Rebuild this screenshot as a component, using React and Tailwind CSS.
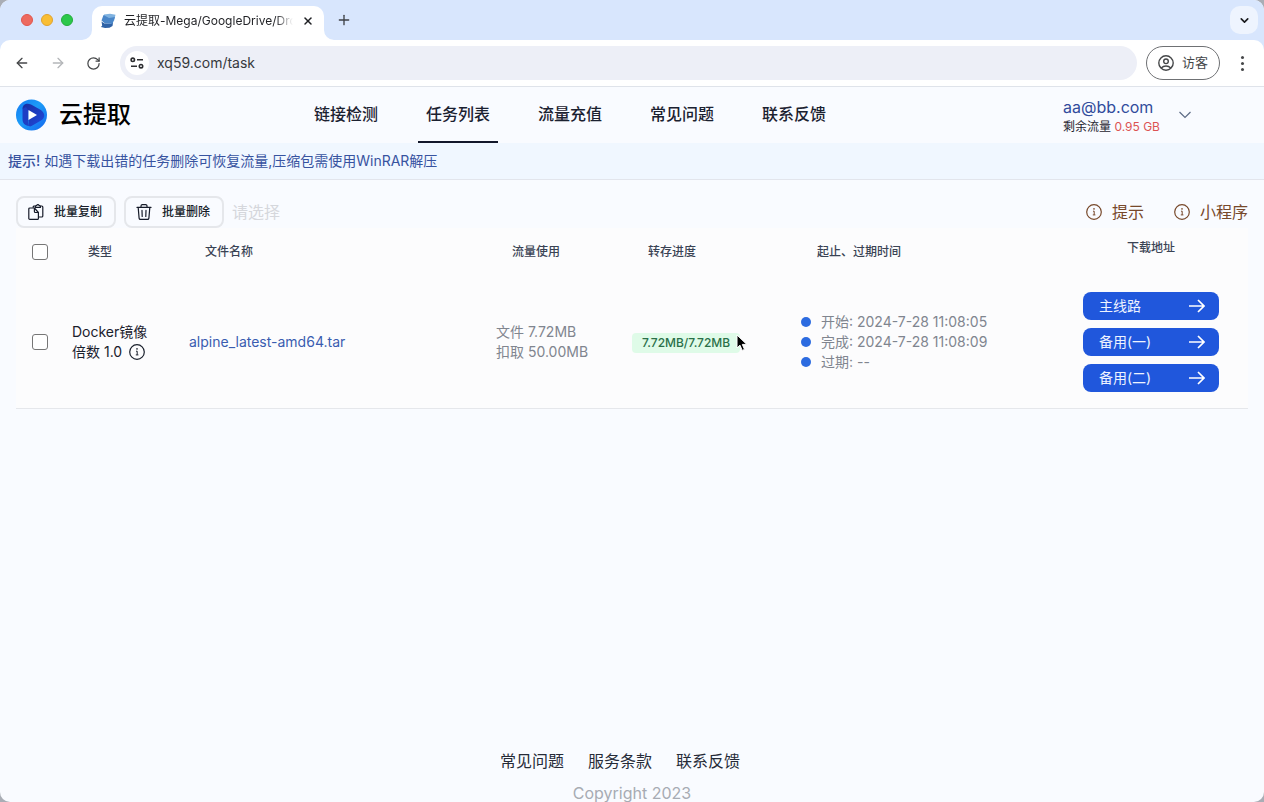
import React, { useState } from "react";
import { ArrowLeft, ArrowRight, ChevronDown, Plus, RotateCw, X } from "lucide-react";

const NAV_ITEMS = ["链接检测", "任务列表", "流量充值", "常见问题", "联系反馈"];
const FOOTER_LINKS = ["常见问题", "服务条款", "联系反馈"];

const TASKS = [
  {
    id: 1,
    type: "Docker镜像",
    ratio: "1.0",
    name: "alpine_latest-amd64.tar",
    size: "7.72MB",
    cost: "50.00MB",
    progress: "7.72MB/7.72MB",
    times: ["开始: 2024-7-28 11:08:05", "完成: 2024-7-28 11:08:09", "过期: --"],
    lines: ["主线路", "备用(一)", "备用(二)"],
  },
];

function InfoIcon() {
  return (
    <svg className="size-4 shrink-0" viewBox="0 0 16 16" fill="none" stroke="currentColor">
      <circle cx="8" cy="8" r="7.3" strokeWidth="1.2" />
      <path d="M7 7.2h1.2v3.6M6.8 10.9h2.6" strokeWidth="1" />
      <circle cx="8" cy="4.9" r="0.8" fill="currentColor" stroke="none" />
    </svg>
  );
}

function CopyIcon() {
  return (
    <svg className="size-4" viewBox="0 0 16 16" fill="none" stroke="currentColor" strokeWidth="1.2" strokeLinejoin="round">
      <path d="M1.800 4h4.600l4 4.500v5.900a1 1 0 0 1-1 1H1.800a1 1 0 0 1-1-1V5a1 1 0 0 1 1-1z" />
      <path d="M6.400 4v3.500a1 1 0 0 0 1 1h3" />
      <path d="M5.200 3.800V3a1 1 0 0 1 1-1h1.200M12.400 2h1.400a1 1 0 0 1 1 1v9a1 1 0 0 1-1 1h-3.200" />
      <path d="M7.400 3.400V2l1.400-.6c.3-1 1.900-1 2.200 0l1.400.6v1.400z" />
    </svg>
  );
}

function TrashIcon() {
  return (
    <svg className="size-4" viewBox="0 0 16 16" fill="none" stroke="currentColor" strokeWidth="1.2" strokeLinejoin="round" strokeLinecap="round">
      <path d="M1 3.400h14M5 3.200V2a1.400 1.400 0 0 1 1.400-1.400h3.200A1.400 1.400 0 0 1 11 2v1.200" />
      <path d="M2.200 3.600l.9 10.500a1.400 1.400 0 0 0 1.400 1.300h7a1.400 1.400 0 0 0 1.400-1.300l.9-10.500" />
      <path d="M6 6.400l.2 6M10 6.400l-.2 6" />
    </svg>
  );
}

function TabFlare({ className }) {
  return (
    <svg className={`absolute bottom-0 size-2.5 fill-white ${className}`} viewBox="0 0 10 10">
      <path d="M10 0v10H0A10 10 0 0 0 10 0z" />
    </svg>
  );
}

function TabStrip() {
  return (
    <div className="flex h-10 items-center bg-[#d8e6fd]">
      <div className="flex w-[92px] gap-2 pl-[21px]">
        <span className="size-3 rounded-full border border-[#e2554d] bg-[#ed6a5f]" />
        <span className="size-3 rounded-full border border-[#e0a32e] bg-[#f9be34]" />
        <span className="size-3 rounded-full border border-[#24ac3b] bg-[#2bc84b]" />
      </div>
      <div className="relative flex h-[34px] w-[232px] items-center self-end rounded-t-[10px] bg-white px-2">
        <TabFlare className="-left-2.5" />
        <TabFlare className="-right-2.5 -scale-x-100" />
        <svg className="mb-1 size-4 shrink-0" viewBox="0 0 16 16">
          <path d="M4 1.500L10 .8 15.500 1.800 14 8 11 9 3.500 7.500z" fill="#7fb2e0" />
          <path d="M3.500 2L1.500 7.500l3.500 3 7.500.5 2.500-7L9 5z" fill="#4a86c8" />
          <path d="M1.500 8.500l3 2 6.500.5 2-1-.5 3-3 1.700-4.500.300L1 14l1.200-1.500z" fill="#2f62a6" />
        </svg>
        <span className="mb-1 ml-2 w-[176px] overflow-hidden text-xs whitespace-nowrap text-[#1f2024] mask-r-from-86% mask-r-to-96%">
          云提取-Mega/GoogleDrive/Dro
        </span>
        <button aria-label="关闭标签页" className="mb-1 flex size-4 shrink-0 items-center justify-center text-[#1f2024]">
          <X size={12} strokeWidth={3} />
        </button>
      </div>
      <button aria-label="新标签页" className="ml-3 text-[#3d4045]">
        <Plus size={16} strokeWidth={2} />
      </button>
      <button
        aria-label="搜索标签页"
        className="mr-1.5 ml-auto flex size-7 items-center justify-center rounded-[10px] bg-[#eef4fe] text-[#1b1c1f]"
      >
        <ChevronDown size={13} strokeWidth={3} />
      </button>
    </div>
  );
}

function AddressBar() {
  return (
    <div className="bg-[#d8e6fd]">
      <div className="flex h-[47px] items-center rounded-t-[10px] border-b border-[#dfe3ea] bg-white px-3.5 py-1.5">
        <button aria-label="后退" className="text-[#454749]">
          <ArrowLeft size={16} strokeWidth={2} />
        </button>
        <button aria-label="前进" className="ml-5 text-[#b4b6b9]">
          <ArrowRight size={16} strokeWidth={2} />
        </button>
        <button aria-label="重新加载" className="ml-5 text-[#454749]">
          <RotateCw size={15} strokeWidth={2} />
        </button>
        <div className="ml-[19px] flex h-[34px] flex-1 items-center rounded-full bg-[#edeff7] pl-[5px]">
          <span className="flex size-6 items-center justify-center rounded-full bg-white">
            <svg className="h-3 w-3.5" viewBox="0 0 14 12" fill="none" stroke="#2c2d30" strokeWidth="1.600">
              <circle cx="2.800" cy="2.800" r="1.700" />
              <path d="M7 2.800h6M1 9.200h6" />
              <circle cx="11" cy="9.200" r="1.700" />
            </svg>
          </span>
          <input
            aria-label="地址"
            defaultValue="xq59.com/task"
            className="ml-2 flex-1 bg-transparent text-sm text-[#37393d] outline-none"
          />
        </div>
        <button className="ml-[9px] flex h-[34px] w-[74px] items-center gap-2 rounded-full border border-[#6f7174] pl-[11px] text-[13px] text-[#454749]">
          <svg className="size-4 shrink-0" viewBox="0 0 16 16" fill="none" stroke="currentColor" strokeWidth="1.400">
            <circle cx="8" cy="8" r="7.200" />
            <circle cx="8" cy="6.300" r="2.300" />
            <path d="M3.200 13c2.600-2.700 7-2.700 9.600 0" />
          </svg>
          访客
        </button>
        <button aria-label="菜单" className="ml-3.5 flex w-4 flex-col items-center gap-[3px]">
          <span className="size-[3px] rounded-full bg-[#454749]" />
          <span className="size-[3px] rounded-full bg-[#454749]" />
          <span className="size-[3px] rounded-full bg-[#454749]" />
        </button>
      </div>
    </div>
  );
}

function Logo() {
  return (
    <svg className="size-8" viewBox="0 0 32 32">
      <defs>
        <linearGradient id="logoBg" x1="0" y1="0" x2="1" y2="1">
          <stop offset="0" stopColor="#1479f2" />
          <stop offset="0.450" stopColor="#1c9cf8" />
          <stop offset="1" stopColor="#1565ee" />
        </linearGradient>
        <linearGradient id="logoFg" x1="0" y1="0" x2="1" y2="1">
          <stop offset="0" stopColor="#1a2fa0" />
          <stop offset="1" stopColor="#1f49dd" />
        </linearGradient>
      </defs>
      <circle cx="15.500" cy="16" r="15.500" fill="url(#logoBg)" />
      <path d="M6.500 10c0-5 4.500-6.500 8.500-4.500l9 5c5.500 3 5.500 8.500 1 11l-9.500 5.500c-2 1-3 0-3-2V12z" fill="url(#logoFg)" />
      <path d="M6.500 10v10c0 4.500 2.500 6.500 6.500 7l-1-3.500V11l-2-3z" fill="#1d3fc4" />
      <path d="M12.500 11l8.500 5-8.500 5z" fill="#fff" />
    </svg>
  );
}

function Header() {
  return (
    <header className="flex h-14 items-center pl-4">
      <a href="#" className="flex w-[290px] shrink-0 items-center gap-[11px] text-2xl font-medium text-black">
        <Logo />
        云提取
      </a>
      <nav className="flex h-full gap-8 font-medium text-[#1b2130]">
        {NAV_ITEMS.map((item) => (
          <a
            key={item}
            href="#"
            className={`flex items-center border-b-2 px-2 ${
              item === "任务列表" ? "border-[#12172a]" : "border-transparent"
            }`}
          >
            {item}
          </a>
        ))}
      </nav>
      <button className="ml-auto flex w-[201px] items-center gap-[19px] text-left">
        <span className="pt-1">
          <span className="block leading-5 text-[#314c9c]">aa@bb.com</span>
          <span className="block text-xs leading-5 text-[#1f2430]">
            剩余流量 <span className="text-[#dc5353]">0.95 GB</span>
          </span>
        </span>
        <svg className="h-2 w-3 text-[#5d6b85]" viewBox="0 0 12 8" fill="none" stroke="currentColor" strokeWidth="1.200">
          <path d="M.5 1L6 6.500 11.500 1" />
        </svg>
      </button>
    </header>
  );
}

function Toolbar() {
  const buttonClass =
    "flex h-8 items-center gap-2.5 rounded-lg border-2 border-[#e5e7eb] px-2.5 pr-3 text-xs font-medium text-[#161b29]";

  return (
    <div className="mt-4 flex items-center px-4">
      <button className={buttonClass}>
        <CopyIcon />
        批量复制
      </button>
      <button className={`ml-2 ${buttonClass}`}>
        <TrashIcon />
        批量删除
      </button>
      <span className="ml-2 text-[#d5d7dc]">请选择</span>
      <div className="ml-auto flex gap-[30px] text-[#77482a]">
        <a href="#" className="flex items-center gap-2.5">
          <InfoIcon />
          提示
        </a>
        <a href="#" className="flex items-center gap-2.5">
          <InfoIcon />
          小程序
        </a>
      </div>
    </div>
  );
}

function TaskTable() {
  const [selected, setSelected] = useState([]);

  const toggle = (id) => {
    setSelected(selected.includes(id) ? selected.filter((s) => s !== id) : [...selected, id]);
  };

  const checkboxClass =
    "block size-4 appearance-none rounded-[3px] border border-[#767676] bg-white checked:bg-[#2563eb]";

  return (
    <table className="w-full table-fixed border-b border-[#e5e7eb] bg-[#fcfcfd] text-left text-sm">
      <colgroup>
        <col className="w-10" />
        <col className="w-[117px]" />
        <col />
        <col className="w-[136px]" />
        <col className="w-[169px]" />
        <col className="w-[282px]" />
        <col className="w-[181px]" />
      </colgroup>
      <thead className="text-xs text-[#3a4354]">
        <tr className="h-12">
          <th className="pl-4">
            <input
              type="checkbox"
              aria-label="全选"
              className={checkboxClass}
              checked={selected.length === TASKS.length}
              onChange={() => setSelected(selected.length ? [] : TASKS.map((t) => t.id))}
            />
          </th>
          <th className="px-8 font-medium">类型</th>
          <th className="px-8 font-medium">文件名称</th>
          <th className="px-8 font-medium">流量使用</th>
          <th className="px-8 font-medium">转存进度</th>
          <th className="px-8 font-medium">起止、过期时间</th>
          <th className="pt-3 pr-[13px] text-center align-top font-medium">下载地址</th>
        </tr>
      </thead>
      <tbody>
        {TASKS.map((task) => (
          <tr key={task.id}>
            <td className="pl-4">
              <input
                type="checkbox"
                aria-label={task.name}
                className={checkboxClass}
                checked={selected.includes(task.id)}
                onChange={() => toggle(task.id)}
              />
            </td>
            <td className="pl-4 text-[#1a202c]">
              <div>{task.type}</div>
              <div className="flex items-center gap-[7px]">
                倍数 {task.ratio}
                <InfoIcon />
              </div>
            </td>
            <td className="px-4">
              <a href="#" className="text-[#3a5cb0]">
                {task.name}
              </a>
            </td>
            <td className="pl-4 text-[#80858f]">
              <div>文件 {task.size}</div>
              <div>扣取 {task.cost}</div>
            </td>
            <td className="px-4">
              <span className="relative inline-block rounded bg-[#dffbe8] px-2.5 py-0.5 align-middle text-xs font-medium text-[#2a7048]">
                {task.progress}
                <svg className="absolute top-px -right-2 h-[18px] w-3" viewBox="0 0 12 18">
                  <path
                    d="M1 1v13l3-2.800 2.200 5.200 2.300-1-2.200-5H10.800z"
                    fill="#000"
                    stroke="#fff"
                    strokeWidth="1"
                  />
                </svg>
              </span>
            </td>
            <td className="px-4 text-[#80858f]">
              <ul>
                {task.times.map((time) => (
                  <li key={time} className="flex items-center gap-2.5">
                    <span className="size-2.5 rounded-full bg-[#2c6be0]" />
                    {time}
                  </li>
                ))}
              </ul>
            </td>
            <td className="py-4 pr-[29px] pl-4">
              <div className="flex flex-col gap-2">
                {task.lines.map((line) => (
                  <button
                    key={line}
                    className="flex h-7 items-center justify-between rounded-lg bg-[#2057dc] pr-3.5 pl-4 text-[#eef3ff]"
                  >
                    {line}
                    <svg className="h-4 w-4" viewBox="0 0 16 16" fill="none" stroke="#fff" strokeWidth="1.700">
                      <path d="M0 8h15M9 2l6 6-6 6" />
                    </svg>
                  </button>
                ))}
              </div>
            </td>
          </tr>
        ))}
      </tbody>
    </table>
  );
}

function App() {
  return (
    <div className="bg-[#a9adb5] font-['Inter','Noto_Sans_CJK_SC',sans-serif]">
      <div className="flex min-h-screen flex-col overflow-hidden rounded-[10px] bg-[#f9fbff]">
        <TabStrip />
        <AddressBar />
        <Header />
        <p className="border-b border-[#e2e5ec] bg-[#f0f7ff] px-2 py-2 text-sm text-[#37539f]">
          <span className="font-medium">提示!</span> 如遇下载出错的任务删除可恢复流量,压缩包需使用WinRAR解压
        </p>
        <main>
          <Toolbar />
          <div className="px-4">
            <TaskTable />
          </div>
        </main>
        <footer className="mt-auto pb-px text-center">
          <nav className="flex justify-center text-[#262b38]">
            {FOOTER_LINKS.map((link) => (
              <a key={link} href="#" className="mr-6">
                {link}
              </a>
            ))}
          </nav>
          <p className="mt-3 leading-4 text-[#a7abb3]">Copyright 2023</p>
        </footer>
      </div>
    </div>
  );
}

export default App;
